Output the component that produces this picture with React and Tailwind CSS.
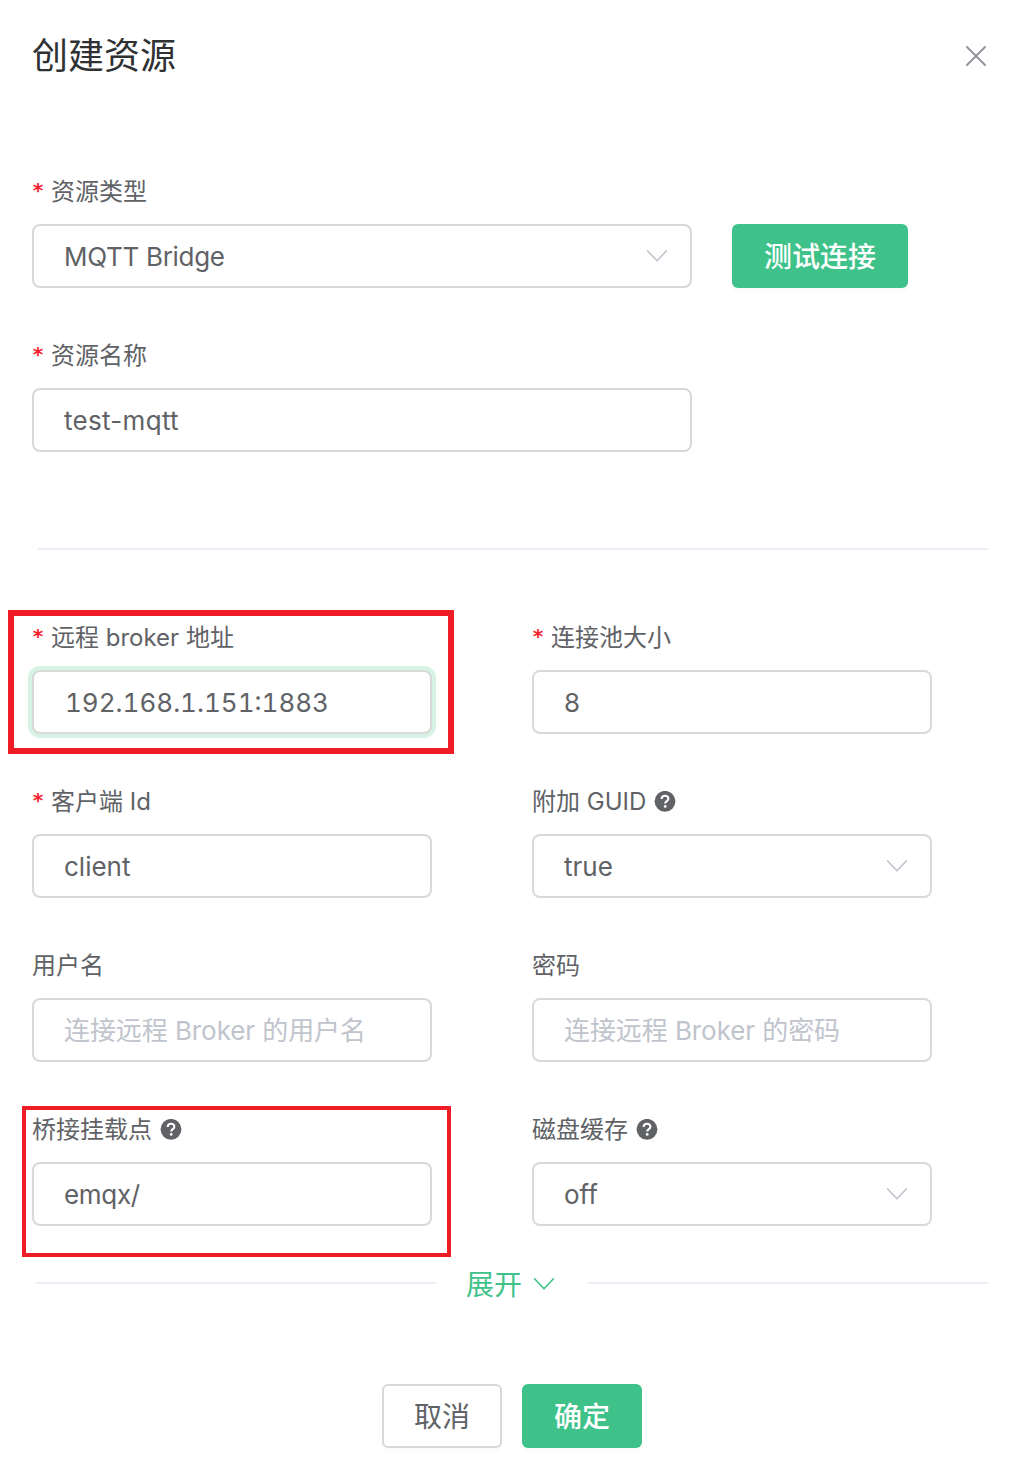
import React from "react";

function Chevron({ className }) {
  return (
    <svg className={className} width="22" height="14" viewBox="0 0 22 14" fill="none" stroke="currentColor" strokeWidth="1.6" strokeLinecap="round" strokeLinejoin="round">
      <path d="M1.5 1.8 11 11.8 20.5 1.8" />
    </svg>
  );
}

function Help() {
  return (
    <svg className="ml-[7.5px] shrink-0" width="22" height="22" viewBox="0 0 22 22" fill="none">
      <circle cx="11" cy="10.3" r="10.4" fill="#606266" />
      <path d="M7.6 7.9C7.6 5.9 9 4.8 11 4.8c2 0 3.4 1.1 3.4 2.9 0 2.4-3.2 2.4-3.2 4.7" stroke="#fff" strokeWidth="2.1" />
      <circle cx="11.2" cy="15.4" r="1.4" fill="#fff" />
    </svg>
  );
}

function Field({ label, required, help, value, valueClass = "", placeholder, select, focused, wide, children }) {
  return (
    <div className={wide ? "relative w-[660px]" : "relative w-[400px]"}>
      <div className="flex h-16 items-center text-2xl text-[#606266]">
        {required && <span className="w-[19px] shrink-0 pb-1 font-['DejaVu_Sans_Mono',monospace] text-[20px] font-bold tracking-tight text-[#f5222d]">*</span>}
        <span className="whitespace-nowrap">{label}</span>
        {help && <Help />}
      </div>
      <div className={`flex h-16 items-center justify-between rounded-lg border-2 border-[#d9d9d9] bg-white pr-[22px] pl-[30px] text-[26px] ${focused ? "shadow-[0_0_0_4px_#d7f3e6]" : ""}`}>
        <span className={`pt-px whitespace-nowrap ${placeholder ? "text-[#c0c4cc]" : "text-[#606266]"} ${valueClass}`}>{value || placeholder}</span>
        {select && <Chevron className="shrink-0 text-[#c0c4cc]" />}
      </div>
      {children}
    </div>
  );
}

export default function App() {
  return (
    <div className="h-[1472px] w-[1022px] overflow-hidden bg-white font-['Inter','Noto_Sans_CJK_SC',sans-serif]">
      <header className="flex h-28 items-center justify-between pr-9 pl-8">
        <h1 className="text-4xl text-[#303133]">创建资源</h1>
        <svg width="20" height="20" viewBox="0 0 20 20" fill="none" stroke="#909399" strokeWidth="1.9" strokeLinecap="round">
          <path d="M1 1 19 19M19 1 1 19" />
        </svg>
      </header>

      <main className="pt-12 pl-8">
        <div className="flex items-end gap-10">
          <Field wide required select label="资源类型" value="MQTT Bridge" valueClass="tracking-[-0.3px]" />
          <button className="h-16 w-44 rounded-md bg-[#3ec28a] pt-0.5 text-[28px] font-medium text-white shadow-[0_4px_0_rgba(0,0,0,0.016)]">测试连接</button>
        </div>
        <div className="mt-9">
          <Field wide required label="资源名称" value="test-mqtt" valueClass="tracking-[0.3px]" />
        </div>

        <div className="mt-24 ml-1.5 h-0.5 w-[950px] bg-[#ebeef5]" />

        <div className="mt-14 grid grid-cols-[400px_400px] gap-x-[100px] gap-y-9">
          <Field required focused label="远程 broker 地址" value="192.168.1.151:1883" valueClass="pl-px tabular-nums">
            <div className="pointer-events-none absolute top-1 -left-6 h-36 w-[446px] border-6 border-[#ee1c25]" />
          </Field>
          <Field required label="连接池大小" value="8" />
          <Field required label="客户端 Id" value="client" />
          <Field select help label="附加 GUID" value="true" />
          <Field label="用户名" placeholder="连接远程 Broker 的用户名" valueClass="tracking-[-0.08px]" />
          <Field label="密码" placeholder="连接远程 Broker 的密码" valueClass="tracking-[-0.08px]" />
          <Field help label="桥接挂载点" value="emqx/" valueClass="tracking-[-0.3px]">
            <div className="pointer-events-none absolute top-2 -left-2.5 h-[151px] w-[429px] border-4 border-[#ee1c25]" />
          </Field>
          <Field select help label="磁盘缓存" value="off" />
        </div>

        <div className="mt-[35px] ml-1 flex h-11 w-[952px] items-center">
          <div className="h-0.5 w-[400px] bg-[#ebeef5]" />
          <div className="flex w-[152px] items-center gap-[11px] pl-[30px] text-[28px] text-[#3ec28a]">
            <span className="pt-[3px]">展开</span>
            <Chevron className="mt-0.5" />
          </div>
          <div className="h-0.5 w-[400px] bg-[#ebeef5]" />
        </div>
      </main>

      <footer className="mt-[79px] ml-[382px] flex gap-5 text-[28px]">
        <button className="h-16 w-30 rounded-md border-2 border-[#d9d9d9] bg-white pt-0.5 text-[#606266] shadow-[0_4px_0_rgba(0,0,0,0.016)]">取消</button>
        <button className="h-16 w-30 rounded-md bg-[#3ec28a] pt-0.5 font-medium text-white shadow-[0_4px_0_rgba(0,0,0,0.016)]">确定</button>
      </footer>
    </div>
  );
}
